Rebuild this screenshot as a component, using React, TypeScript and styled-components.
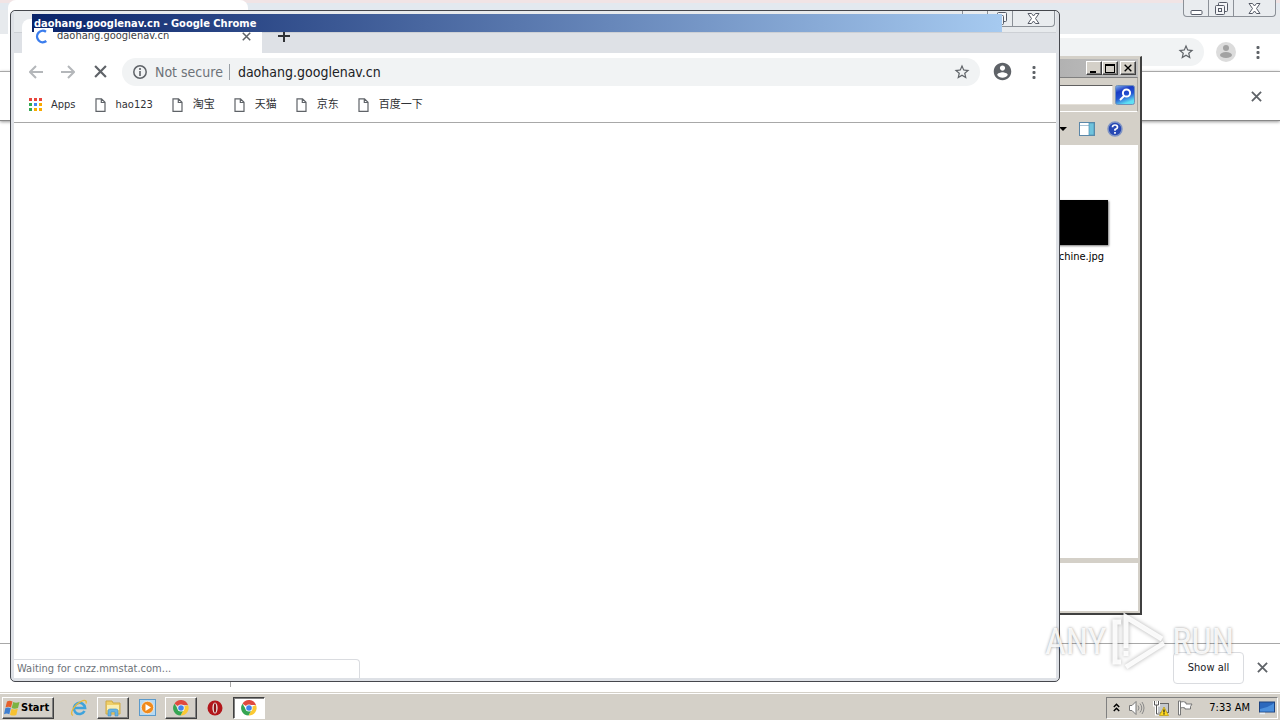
import React from 'react';
import styled, { createGlobalStyle, css } from 'styled-components';

const Global = createGlobalStyle`
  * { box-sizing: border-box; }
  html, body { margin: 0; overflow: hidden; }
  body, button, input { font-family: "DejaVu Sans Condensed", "Noto Sans CJK SC", sans-serif; font-size: 11px; line-height: 16px; }
  button { padding: 0; border: 0; background: none; color: inherit; }
  svg { display: block; flex: none; }
`;

const Desktop = styled.div`
  display: flex;
  flex-direction: column;
  height: 100vh;
  background: #d4d0c8;
`;
const Workspace = styled.div`
  position: relative;
  flex: 1;
  overflow: hidden;
  background: #fff;
`;

const BackWindow = styled.section`
  display: flex;
  flex-direction: column;
  height: 100%;
  background: #fff;
`;
const BackTitle = styled.header`
  display: flex;
  justify-content: space-between;
  height: 34px;
  padding: 0 4px 0 8px;
  background: linear-gradient(#f1e4e5 0 3px, #e3e9ef 3px 10px, #e7eaed 10px);
`;
const BackTab = styled.div`
  width: 240px;
  background: #fff;
  border-radius: 8px 8px 0 0;
`;
const Toolbar = styled.div<{ $back?: boolean }>`
  display: flex;
  align-items: center;
  height: 37px;
  padding: ${p => (p.$back ? '0 10px 2px 12px' : '0 12px')};
  background: #fff;
  color: #5f6368;
`;
const Omnibox = styled.label`
  display: flex;
  align-items: center;
  flex: 1;
  height: 28px;
  margin-left: 12px;
  padding: 0 9px 0 10px;
  border-radius: 14px;
  background: #f1f3f4;
`;
const Spacer = styled.span`
  flex: 1;
`;
const NotSecure = styled.span`
  margin-left: 7px;
  padding-right: 6px;
  border-right: 1px solid #9aa0a6;
  color: #6d7278;
  font-size: 14px;
`;
const Address = styled.input`
  flex: 1;
  min-width: 0;
  margin-left: 8px;
  padding: 0;
  border: 0;
  outline: 0;
  background: none;
  color: #202124;
  font-size: 14px;
`;
const IconButton = styled.button<{ $size?: number; $gap?: number }>`
  display: grid;
  place-items: center;
  flex: none;
  width: ${p => p.$size ?? 24}px;
  height: ${p => p.$size ?? 24}px;
  margin-left: ${p => p.$gap ?? 0}px;
  color: #5f6368;
`;
const InfoBar = styled.div`
  display: flex;
  align-items: center;
  justify-content: flex-end;
  height: 50px;
  padding-right: 12px;
  border-top: 1px solid #a8a8a8;
  border-bottom: 1px solid #888;
  box-shadow: 0 1px 3px #999;
`;
const BlankPage = styled.main`
  flex: 1;
`;
const DownloadBar = styled.footer`
  display: flex;
  align-items: center;
  height: 49px;
  padding: 0 6px 1px 0;
  border-top: 1px solid #a8a8a8;
`;
const DownloadItem = styled.div`
  width: 231px;
  height: 38px;
  margin-right: auto;
  border-right: 1px solid #a8a8a8;
`;
const ShowAll = styled.button`
  width: 71px;
  height: 32px;
  border: 1px solid #dadce0;
  border-radius: 4px;
  background: #fff;
  color: #202124;
`;

const Controls = styled.div<{ $back?: boolean }>`
  display: flex;
  height: ${p => (p.$back ? 17 : 16)}px;
  border: 1px solid #8b9097;
  border-top: 0;
  border-radius: 0 0 4px 4px;
  background: #e9ecef;
  color: #555a66;
  button { display: grid; place-items: center; width: 25px; border-right: 1px solid #8b9097; }
  button:last-child { width: 41px; border-right: 0; }
`;

const Explorer = styled.section`
  position: absolute;
  top: 56px;
  right: 138px;
  bottom: 77px;
  width: 360px;
  display: flex;
  flex-direction: column;
  padding: 2px;
  border: 1px solid #d4d0c8;
  border-right: 2px solid #404040;
  border-bottom: 2px solid #404040;
  background: #d4d0c8;
`;
const ExplorerTitle = styled.header`
  display: flex;
  align-items: center;
  justify-content: flex-end;
  height: 18px;
  padding-right: 2px;
  background: linear-gradient(90deg, #808080, #c0c0c0);
`;
const Classic = styled.button<{ $gap?: boolean }>`
  display: grid;
  place-items: center;
  width: 16px;
  height: 14px;
  margin-left: ${p => (p.$gap ? 2 : 0)}px;
  border: 1px solid;
  border-color: #fff #404040 #404040 #fff;
  box-shadow: inset -1px -1px #808080;
  background: #d4d0c8;
  color: #000;
`;
const SearchRow = styled.div`
  display: flex;
  align-items: center;
  justify-content: flex-end;
  gap: 2px;
  height: 35px;
  padding-right: 2px;
  border: 1px solid #808080;
  border-right-color: #aaa69e;
  border-bottom-color: #fff;
`;
const SearchInput = styled.input`
  flex: 1;
  min-width: 0;
  height: 20px;
  border: 1px solid;
  border-color: #606060 #e4e0d8 #e4e0d8 #606060;
  background: #fff;
`;
const CommandRow = styled.div`
  display: flex;
  align-items: center;
  justify-content: flex-end;
  gap: 11px;
  height: 33px;
  padding-right: 15px;
`;
const Files = styled.div`
  flex: 1;
  display: flex;
  justify-content: flex-end;
  padding: 55px 30px 0 0;
  background: #fff;
`;
const File = styled.figure`
  display: flex;
  flex-direction: column;
  align-items: flex-end;
  gap: 4px;
  margin: 0;
  figcaption { padding-right: 4px; color: #000; }
`;
const Thumb = styled.div`
  width: 80px;
  height: 45px;
  background: #000;
  box-shadow: 1px 1px 2px #777;
`;
const Details = styled.div`
  height: 53px;
  border-top: 5px solid #d4d0c8;
  background: #fff;
`;

const FrontWindow = styled.section`
  position: absolute;
  top: 10px;
  left: 10px;
  right: 220px;
  bottom: 10px;
  display: flex;
  flex-direction: column;
  padding: 0 3px 3px;
  border: 1px solid #45474d;
  border-radius: 5px;
  background: #dee1e6;
`;
const FrontTitle = styled.header`
  position: relative;
  display: flex;
  align-items: flex-end;
  height: 42px;
  padding-left: 8px;
  background: linear-gradient(#e7eaed 0 21px, #cdd0d5 21px 22px, #dee1e6 22px);
`;
const Caption = styled.div`
  position: absolute;
  top: 3px;
  left: 18px;
  right: 54px;
  height: 18px;
  padding: 1px 1px 0 2px;
  background: linear-gradient(90deg, #0a246a, #a6caf0);
  color: #fff;
  font-weight: 700;
  line-height: 17px;
`;
const Tab = styled.div`
  display: flex;
  align-items: center;
  width: 240px;
  height: 34px;
  padding: 0 8px 0 12px;
  border-radius: 8px 8px 0 0;
  background: #fff;
  color: #3c4043;
`;
const Spinner = styled.div`
  position: relative;
  z-index: 1;
  width: 19px;
  height: 17px;
  margin-right: 4px;
  background: #fff;
`;
const TabTitle = styled.span`
  flex: 1;
`;
const NewTab = styled.button`
  display: grid;
  place-items: center;
  width: 24px;
  height: 34px;
  margin-left: 10px;
  color: #303236;
`;
const FrontControls = styled.div`
  position: absolute;
  top: 0;
  right: 1px;
`;
const Bookmarks = styled.nav`
  display: flex;
  align-items: center;
  gap: 18px;
  height: 33px;
  padding: 0 14px 2px;
  border-bottom: 1px solid #a8a8a8;
  background: #fff;
`;
const Bookmark = styled.a`
  display: flex;
  align-items: center;
  gap: 9px;
  color: #303236;
  text-decoration: none;
`;
const Page = styled.main`
  flex: 1;
  display: flex;
  align-items: flex-end;
  background: #fff;
`;
const Status = styled.div`
  width: 346px;
  height: 19px;
  padding: 1px 3px;
  border: 1px solid #dadce0;
  border-left: 0;
  border-bottom: 0;
  border-radius: 0 4px 0 0;
  color: #6d7278;
`;

const Watermark = styled.div`
  position: absolute;
  right: 46px;
  bottom: 20px;
  display: flex;
  align-items: center;
  gap: 4px;
  color: rgba(255, 255, 255, 0.9);
  font: 36px/60px "Roboto Condensed", "Open Sans Condensed", Roboto, sans-serif;
  text-shadow: 0 0 3px rgba(0, 0, 0, 0.4);
  pointer-events: none;
  svg { filter: drop-shadow(0 0 2px rgba(0, 0, 0, 0.35)); }
`;

const Taskbar = styled.footer`
  display: flex;
  align-items: center;
  height: 28px;
  padding: 2px 2px 0;
  border-top: 1px solid #d4d0c8;
  box-shadow: inset 0 1px #fff;
  background: #d4d0c8;
`;
const raised = css`
  border: 1px solid;
  border-color: #fff #404040 #404040 #fff;
  box-shadow: inset -1px -1px #808080;
`;
const Start = styled.button`
  ${raised}
  display: flex;
  align-items: center;
  gap: 1px;
  width: 52px;
  height: 22px;
  margin-right: 9px;
  padding-left: 1px;
  font-weight: 700;
  color: #000;
`;
const Task = styled.button<{ $state?: 'open' | 'active' }>`
  display: grid;
  place-items: center;
  width: 32px;
  height: 22px;
  margin-right: 2px;
  ${p => p.$state === 'open' && raised}
  ${p =>
    p.$state === 'active' &&
    css`
      border: 1px solid;
      border-color: #404040 #fff #fff #404040;
      box-shadow: inset 1px 1px #808080;
      background: #fff;
    `}
`;
const Tray = styled.div`
  display: flex;
  align-items: center;
  gap: 8px;
  height: 22px;
  margin-left: auto;
  padding: 0 2px 0 6px;
  border: 1px solid;
  border-color: #808080 #fff #fff #808080;
  color: #000;
  time { margin: 0 1px 0 8px; }
`;

const Cross = ({ size = 12, width = 2 }: { size?: number; width?: number }) => (
  <svg width={size} height={size} viewBox="0 0 12 12" stroke="currentColor" strokeWidth={width} fill="none">
    <path d="M1 1l10 10M11 1L1 11" />
  </svg>
);
const Star = () => (
  <svg width="18" height="18" viewBox="0 0 24 24" fill="currentColor">
    <path d="M22 9.24l-7.19-.62L12 2 9.19 8.63 2 9.24l5.46 4.73L5.82 21 12 17.27 18.18 21l-1.63-7.03L22 9.24zM12 15.4l-3.76 2.27 1-4.28-3.32-2.88 4.38-.38L12 6.1l1.71 4.04 4.38.38-3.32 2.88 1 4.28L12 15.4z" />
  </svg>
);
const Dots = () => (
  <svg width="4" height="14" viewBox="0 0 4 14" fill="currentColor">
    <rect x="0.5" y="1" width="3" height="3" rx="1" />
    <rect x="0.5" y="6" width="3" height="3" rx="1" />
    <rect x="0.5" y="11" width="3" height="3" rx="1" />
  </svg>
);
const Person = () => (
  <svg width="21" height="21" viewBox="0 0 24 24" fill="currentColor">
    <path d="M12 2C6.48 2 2 6.48 2 12s4.48 10 10 10 10-4.48 10-10S17.52 2 12 2zm0 3c1.66 0 3 1.34 3 3s-1.34 3-3 3-3-1.34-3-3 1.34-3 3-3zm0 14.2c-2.5 0-4.71-1.28-6-3.22.03-1.99 4-3.08 6-3.08 1.99 0 5.97 1.09 6 3.08-1.29 1.94-3.5 3.22-6 3.22z" />
  </svg>
);
const Guest = () => (
  <svg width="20" height="20" viewBox="0 0 20 20">
    <circle cx="10" cy="10" r="10" fill="#dcdcdc" />
    <circle cx="10" cy="6" r="3" fill="#a2a2a2" />
    <ellipse cx="10" cy="13" rx="6" ry="3" fill="#a2a2a2" />
  </svg>
);
const Arrow = ({ flip }: { flip?: boolean }) => (
  <svg width="14" height="14" viewBox="0 0 14 14" stroke="#b4b7ba" strokeWidth="2" fill="none">
    <path d={flip ? 'M0 7h13M7 1l6 6-6 6' : 'M14 7H1M7 1L1 7l6 6'} />
  </svg>
);
const Info = () => (
  <svg width="16" height="16" viewBox="0 0 16 16">
    <circle cx="8" cy="8" r="6.2" fill="none" stroke="#5f6368" strokeWidth="1.5" />
    <path d="M8 4v2M8 7v5" stroke="#5f6368" strokeWidth="1.6" />
  </svg>
);
const Doc = () => (
  <svg width="13" height="14" viewBox="0 0 13 14" fill="none" stroke="#5f6368" strokeWidth="1.2">
    <path d="M2 .8h5.500l3.500 3.500v9h-9zM7.300 .8v3.700h3.700" />
  </svg>
);
const appColors = ['#e8453c', '#e8453c', '#e8453c', '#34a853', '#4285f4', '#f9ab00', '#34a853', '#f9ab00', '#f9ab00'];
const AppsGrid = () => (
  <svg width="14" height="14" viewBox="0 0 14 14">
    {appColors.map((c, i) => (
      <rect key={i} x={1 + (i % 3) * 5} y={Math.floor(i / 3) * 5} width="3" height="3" fill={c} />
    ))}
  </svg>
);
const CloseGlyph = () => (
  <svg width="13" height="11" viewBox="0 0 13 11" fill="#fff" stroke="currentColor">
    <path d="M1 .5h3.500l2 2.500 2-2.500H12L8.500 5.500 12 10.500H8.500l-2-2.500-2 2.500H1l3.500-5z" />
  </svg>
);
const RestoreGlyph = () => (
  <svg width="13" height="13" viewBox="0 0 13 13" fill="#f4f5f7" stroke="currentColor">
    <rect x="3.500" y="0.500" width="9" height="9" rx="1" />
    <rect x="0.500" y="3.500" width="9" height="9" rx="1" />
    <rect x="3.500" y="6.500" width="3" height="3" />
  </svg>
);
const MinGlyph = () => (
  <svg width="13" height="13" viewBox="0 0 13 13" fill="#fff" stroke="currentColor">
    <rect x="1" y="8.500" width="11" height="4" rx="1" />
  </svg>
);
const WindowControls = ({ back }: { back?: boolean }) => (
  <Controls $back={back}>
    <button aria-label="Minimize"><MinGlyph /></button>
    <button aria-label="Restore"><RestoreGlyph /></button>
    <button aria-label="Close"><CloseGlyph /></button>
  </Controls>
);

const ChromeLogo = () => (
  <svg width="16" height="16" viewBox="0 0 16 16">
    <path d="M8 8L1.500 3.700A7.500 7.500 0 0 1 15 5H8z" fill="#e04a3f" />
    <path d="M8 8l7-3a7.500 7.500 0 0 1-7.400 10.500L11 9z" fill="#fbc934" />
    <path d="M8 8l2.500 2-3 5.500A7.500 7.500 0 0 1 1.500 3.700L5 9.500z" fill="#35a552" />
    <circle cx="8" cy="8" r="3.600" fill="#fff" />
    <circle cx="8" cy="8" r="2.800" fill="#4384ee" />
  </svg>
);
const WindowsFlag = () => (
  <svg width="16" height="16" viewBox="0 0 16 16">
    <path d="M3 1.500q2.500-1.500 5.500 0L7 7.500q-2.500-1.500-5.500 0z" fill="#e5602c" />
    <path d="M9.200 2q2.500 1.500 6.300 0L14 8q-3.500 1.500-6.300 0z" fill="#7cb342" />
    <path d="M1.300 8.300q2.500-1.500 5.500 0l-1.500 6q-2.500-1.500-5.300 0z" fill="#3f7fd0" />
    <path d="M7.500 8.800q2.500 1.500 6.300 0L12.300 15q-3.300 1.300-6.300-.3z" fill="#f6c12f" />
  </svg>
);
const IELogo = () => (
  <svg width="18" height="18" viewBox="0 0 18 18" fill="none">
    <path d="M14.500 12a5.600 5.600 0 1 1 .6-3H5" stroke="#3fa3dc" strokeWidth="2.600" />
    <path d="M3 16.500C-1 15 4 6 11 2.500c4-2 6-1 5 2" stroke="#e8b93a" strokeWidth="1.300" />
  </svg>
);
const Folder = () => (
  <svg width="18" height="18" viewBox="0 0 18 18">
    <path d="M2 2h6l1 2h7v11H2z" fill="#efcf68" stroke="#cfa945" />
    <path d="M3 6h12v5H3z" fill="#fbeeb0" />
    <path d="M4 17v-5q0-2 2-2h6q2 0 2 2v5h-3v-4H7v4z" fill="#67b5e4" stroke="#3f8fc4" strokeWidth=".6" />
  </svg>
);
const MediaPlayer = () => (
  <svg width="17" height="17" viewBox="0 0 17 17">
    <rect x=".5" y=".5" width="16" height="16" fill="#b6d9f2" stroke="#5b9acb" />
    <circle cx="8.500" cy="8.500" r="6.200" fill="#f08a1c" stroke="#fff" strokeWidth=".6" />
    <path d="M6.500 5l5.500 3.500-5.500 3.500z" fill="#fff" />
  </svg>
);
const OperaLogo = () => (
  <svg width="16" height="16" viewBox="0 0 16 16">
    <circle cx="8" cy="8" r="7.500" fill="#b3161b" />
    <ellipse cx="8" cy="8" rx="2.600" ry="5.500" fill="#ece3df" />
    <ellipse cx="8" cy="8" rx="1.200" ry="4.800" fill="#8d1114" />
  </svg>
);
const Magnifier = () => (
  <svg width="20" height="20" viewBox="0 0 20 20" fill="none">
    <defs>
      <linearGradient id="mag" x1="0" y1="0" x2="0.400" y2="1">
        <stop offset="0" stopColor="#86b5ee" />
        <stop offset=".35" stopColor="#1a3cc4" />
        <stop offset=".65" stopColor="#2554d2" />
        <stop offset="1" stopColor="#5fe0f4" />
      </linearGradient>
    </defs>
    <rect x=".5" y=".5" width="19" height="19" rx="2" fill="url(#mag)" stroke="#7190b8" />
    <circle cx="11.500" cy="8" r="3.600" stroke="#fff" strokeWidth="2" />
    <path d="M9 11l-4 4" stroke="#fff" strokeWidth="2" />
  </svg>
);
const Pane = () => (
  <svg width="16" height="14" viewBox="0 0 16 14">
    <rect x=".5" y=".5" width="15" height="13" fill="#fff" stroke="#5c87a8" />
    <path d="M1 3.500h9" stroke="#a9c3d6" />
    <rect x="10" y="1" width="5" height="12" fill="#6fc3dd" stroke="#4e8fb0" strokeWidth=".7" />
  </svg>
);
const Help = () => (
  <svg width="16" height="16" viewBox="0 0 16 16">
    <circle cx="8" cy="8" r="7" fill="#2748b4" stroke="#7f94c4" strokeWidth="1.500" />
    <path d="M5.500 6.300Q5.500 4 8 4t2.500 2.200Q10.500 7.500 8 8.500v1.300M8 11v1.700" fill="none" stroke="#fff" strokeWidth="1.700" />
  </svg>
);
const Chevrons = () => (
  <svg width="7" height="9" viewBox="0 0 7 9" fill="none" stroke="#000" strokeWidth="1.500">
    <path d="M.8 4l2.700-2.700L6.200 4M.8 8l2.700-2.700L6.200 8" />
  </svg>
);
const Speaker = () => (
  <svg width="17" height="16" viewBox="0 0 17 16">
    <path d="M1.500 5.500h2.500l4-4v13l-4-4H1.500z" fill="#fff" stroke="#777" />
    <path d="M10 5.500q2 2.500 0 5M12 3.500q3.500 4.500 0 9M14 2q4 6 0 12" fill="none" stroke="#888" />
  </svg>
);
const Network = () => (
  <svg width="16" height="16" viewBox="0 0 16 16">
    <rect x="4.500" y="3.500" width="11" height="9" fill="#c4c8cc" stroke="#666" />
    <path d="M1.500 1v4h4V1M3.500 5v9h4" fill="none" stroke="#fff" strokeWidth="3" />
    <path d="M1.500 1v4h4V1M3.500 5v9h4" fill="none" stroke="#555" />
    <path d="M11 7l4.500 8.500h-9z" fill="#ffd91f" stroke="#b8960a" strokeWidth=".7" />
    <path d="M11 9.500v3M11 13.200v1.200" stroke="#222" strokeWidth="1.300" />
  </svg>
);
const Flag = () => (
  <svg width="16" height="16" viewBox="0 0 16 16" fill="#fff" stroke="#777">
    <path d="M1.500 1h2v14h-2z" />
    <path d="M3.500 2q3-1 5.500.5v1.500h6l-1.500 2.500v2.500H8V8q-2.500-1-4.500 0z" />
  </svg>
);
const ShowDesktop = () => (
  <svg width="16" height="14" viewBox="0 0 16 14">
    <rect x=".5" y="1" width="15" height="10" fill="#2b68bd" stroke="#1c427f" />
    <path d="M1 8q8-1 14-6v8.500H1z" fill="#4b8fdc" />
    <path d="M1 12.500h5" stroke="#e7f0fa" strokeWidth="1.500" />
  </svg>
);

const links = ['hao123', '淘宝', '天猫', '京东', '百度一下'];

export default function App() {
  return (
    <Desktop>
      <Global />
      <Workspace>
        <BackWindow>
          <BackTitle>
            <BackTab />
            <WindowControls back />
          </BackTitle>
          <Toolbar $back>
            <Omnibox as="div">
              <Spacer />
              <IconButton aria-label="Bookmark" $size={18}><Star /></IconButton>
            </Omnibox>
            <IconButton aria-label="Profile" $gap={10}><Guest /></IconButton>
            <IconButton aria-label="Menu" $gap={8}><Dots /></IconButton>
          </Toolbar>
          <InfoBar>
            <IconButton aria-label="Dismiss"><Cross size={11} /></IconButton>
          </InfoBar>
          <BlankPage />
          <DownloadBar>
            <DownloadItem />
            <ShowAll>Show all</ShowAll>
            <IconButton aria-label="Close downloads" $gap={6}><Cross size={11} /></IconButton>
          </DownloadBar>
        </BackWindow>

        <Explorer>
          <ExplorerTitle>
            <Classic aria-label="Minimize"><svg width="10" height="9"><path d="M1 7h6v2H1z" /></svg></Classic>
            <Classic aria-label="Maximize"><svg width="10" height="9"><path d="M0 0h10v9H0zM1 2v6h8V2z" fillRule="evenodd" /></svg></Classic>
            <Classic aria-label="Close" $gap><Cross size={8} /></Classic>
          </ExplorerTitle>
          <SearchRow>
            <SearchInput aria-label="Search" />
            <IconButton aria-label="Go" $size={20}><Magnifier /></IconButton>
          </SearchRow>
          <CommandRow>
            <svg width="8" height="4"><path d="M0 0h8L4 4z" /></svg>
            <IconButton aria-label="Preview pane" $size={18}><Pane /></IconButton>
            <IconButton aria-label="Help" $size={16}><Help /></IconButton>
          </CommandRow>
          <Files>
            <File>
              <Thumb />
              <figcaption>chine.jpg</figcaption>
            </File>
          </Files>
          <Details />
        </Explorer>

        <FrontWindow>
          <FrontTitle>
            <Tab>
              <Spinner>
                <svg width="15" height="17" viewBox="0 0 15 17" fill="none" stroke="#3b7ded" strokeWidth="2.400">
                  <path d="M12 3.800A5.700 5.700 0 1 0 12.300 13" />
                </svg>
              </Spinner>
              <TabTitle>daohang.googlenav.cn</TabTitle>
              <IconButton aria-label="Close tab" $size={16}><Cross size={9} width={2} /></IconButton>
            </Tab>
            <NewTab aria-label="New tab">
              <svg width="12" height="12" stroke="currentColor" strokeWidth="2"><path d="M6 0v12M0 6h12" /></svg>
            </NewTab>
            <FrontControls><WindowControls /></FrontControls>
            <Caption>daohang.googlenav.cn - Google Chrome</Caption>
          </FrontTitle>
          <Toolbar>
            <IconButton aria-label="Back" $size={20}><Arrow /></IconButton>
            <IconButton aria-label="Forward" $size={20} $gap={12}><Arrow flip /></IconButton>
            <IconButton aria-label="Stop" $size={20} $gap={12}><Cross size={13} /></IconButton>
            <Omnibox>
              <Info />
              <NotSecure>Not secure</NotSecure>
              <Address aria-label="Address" defaultValue="daohang.googlenav.cn" />
              <IconButton aria-label="Bookmark" $size={18}><Star /></IconButton>
            </Omnibox>
            <IconButton aria-label="Profile" $gap={10}><Person /></IconButton>
            <IconButton aria-label="Menu" $gap={10} $size={20}><Dots /></IconButton>
          </Toolbar>
          <Bookmarks>
            <Bookmark href="#"><AppsGrid />Apps</Bookmark>
            {links.map(l => (
              <Bookmark href="#" key={l}><Doc />{l}</Bookmark>
            ))}
          </Bookmarks>
          <Page>
            <Status>Waiting for cnzz.mmstat.com...</Status>
          </Page>
        </FrontWindow>

        <Watermark>
          <span>ANY</span>
          <svg width="58" height="60" viewBox="0 0 58 60" fill="none" stroke="#fff" strokeOpacity=".9" strokeWidth="5">
            <path d="M11 10H5v40h6M16 36V5l36 22M16 55l38-24M16 44v-5" />
          </svg>
          <span>RUN</span>
        </Watermark>
      </Workspace>

      <Taskbar>
        <Start><WindowsFlag />Start</Start>
        <Task aria-label="Internet Explorer"><IELogo /></Task>
        <Task aria-label="Explorer" $state="open"><Folder /></Task>
        <Task aria-label="Media Player"><MediaPlayer /></Task>
        <Task aria-label="Chrome" $state="open"><ChromeLogo /></Task>
        <Task aria-label="Opera"><OperaLogo /></Task>
        <Task aria-label="Google Chrome" $state="active"><ChromeLogo /></Task>
        <Tray>
          <Chevrons />
          <Speaker />
          <Network />
          <Flag />
          <time>7:33 AM</time>
          <ShowDesktop />
        </Tray>
      </Taskbar>
    </Desktop>
  );
}
